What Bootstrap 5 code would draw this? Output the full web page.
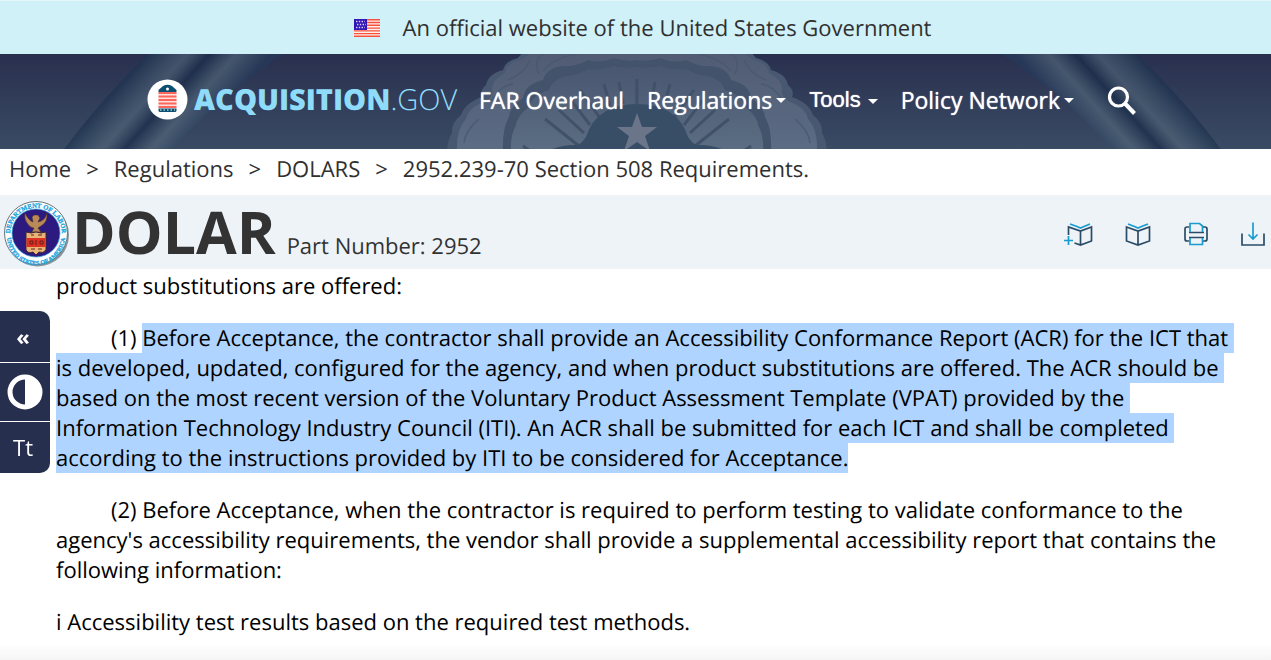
<!DOCTYPE html>
<html lang="en">
<head>
<meta charset="utf-8">
<meta name="viewport" content="width=device-width, initial-scale=1">
<title>2952.239-70 Section 508 Requirements. | Acquisition.GOV</title>
<link href="https://cdn.jsdelivr.net/npm/bootstrap@5.3.0/dist/css/bootstrap.min.css" rel="stylesheet">
<style>
  body { font-family: "Open Sans", sans-serif; font-size: 22px; line-height: 30px; color: #000; background: #fff; overflow: hidden; text-rendering: geometricPrecision; }
  .gov-banner { background: #d1f1f8; color: #303030; height: 54px; gap: 23px; border-top: 1px solid #e4f7fb; padding: 0 0 0 14px; }
  .site-header { position: relative; height: 95px; background: linear-gradient(#29304f, #3a4b64); overflow: hidden; }
  .site-header .backdrop { position: absolute; inset: 0; width: 100%; height: 100%; }
  .header-inner { position: relative; height: 100%; padding: 0 0 4px 147px; }
  .brand { color: #8fdcfa; font-size: 29px; gap: 6px; width: 332px; text-decoration: none; line-height: 40px; white-space: nowrap; }
  .brand b { font-weight: 800; }
  .brand span { font-weight: 300; }
  .main-menu { gap: 23px; }
  .main-menu a, .main-menu button { color: #fff; font-size: 23px; line-height: 32px; padding: 0; border: 0; background: none; text-decoration: none; white-space: nowrap; text-shadow: 0 0 1px #fff; }
  .main-menu .dropdown-toggle::after { border-top-width: 5px; border-left-width: 5px; border-right-width: 5px; margin-left: 4px; vertical-align: 6px; }
  .main-menu .tools-toggle { font-family: "Liberation Sans", sans-serif; font-size: 22px; }
  .main-menu .tools-toggle::after { margin-left: 7px; vertical-align: 3px; }
  .search-btn { margin-left: 10px; }
  .crumbs { height: 46px; padding: 0 9px 6px; color: #303030; }
  .crumbs .breadcrumb { --bs-breadcrumb-divider: ">"; --bs-breadcrumb-divider-color: #303030; --bs-breadcrumb-item-padding-x: 15px; --bs-breadcrumb-item-active-color: #303030; --bs-breadcrumb-font-size: 22px; }
  .crumbs a { color: #303030; text-decoration: none; }
  .title-bar { background: #eef3f8; color: #333; height: 74px; padding: 3px 0 0 3px; }
  .title-bar h1 { font-size: 59px; font-weight: 700; line-height: 68px; }
  .title-text { gap: 11px; margin-left: 1px; padding-bottom: 3px; }
  .tool-links { gap: 29px; padding-right: 5px; }
  .tool-links button { border: 0; background: none; padding: 0; line-height: 0; }
  .article { padding: 2px 36px 0 56px; }
  .article p { margin: 0 0 22px; white-space: break-spaces; }
  .article .indent { text-indent: 55px; }
  .picked { background: #afd4ff; }
  .side-tools { position: fixed; left: 0; top: 311px; width: 50px; border-radius: 0 10px 10px 0; overflow: hidden; background: #272f4e; }
  .side-tools button { border: 0; border-bottom: 1px solid #fff; background: none; color: #fff; height: 52px; padding: 0 4px 2px 0; display: flex; align-items: center; justify-content: center; width: 100%; }
  .side-tools .contrast-btn { height: 59px; padding: 0; }
  .side-tools button:last-child { border: 0; height: 51px; }
  .bottom-fade { position: fixed; left: 0; right: 0; bottom: 0; height: 16px; background: linear-gradient(#fff0, #f5f5f5); }
</style>
</head>
<body>
<div class="gov-banner d-flex align-items-center justify-content-center">
  <svg width="26" height="18" viewBox="0 0 26 18" aria-hidden="true">
    <path fill="#fff0ec" d="M0 0h26v18H0z"/>
    <path stroke="#f8503c" stroke-width="1.4" d="M0 .7h26M0 3.5h26M0 6.3h26M0 9.1h26M0 11.9h26M0 14.6h26M0 17.3h26"/>
    <path fill="#3215b5" d="M0 0h13v11H0z"/>
    <path stroke="#d8cff5" stroke-width="1.4" stroke-dasharray="1.4 1.4" d="M2 2.5h9M3 5.5h9M2 8.5h9"/>
  </svg>
  <span>An official website of the United States Government</span>
</div>

<header class="site-header">
  <svg class="backdrop" viewBox="0 54 1271 95" preserveAspectRatio="xMidYMid slice" aria-hidden="true">
    <defs>
      <linearGradient id="ringShade" gradientUnits="userSpaceOnUse" x1="107" y1="100" x2="175" y2="161">
        <stop offset="0" stop-color="#1f3350" stop-opacity=".75"/><stop offset=".32" stop-color="#53687b" stop-opacity=".6"/>
        <stop offset=".5" stop-color="#1a2c4a" stop-opacity=".75"/><stop offset=".72" stop-color="#53687b" stop-opacity=".65"/>
        <stop offset="1" stop-color="#24395a" stop-opacity=".7"/>
      </linearGradient>
      <linearGradient id="sealFill" gradientUnits="userSpaceOnUse" x1="0" y1="54" x2="0" y2="149">
        <stop offset="0" stop-color="#515c74"/><stop offset="1" stop-color="#5b6c84"/>
      </linearGradient>
      <linearGradient id="glory" gradientUnits="userSpaceOnUse" x1="0" y1="62" x2="0" y2="149">
        <stop offset="0" stop-color="#48566f"/><stop offset="1" stop-color="#5b6d83"/>
      </linearGradient>
      <g id="cloudHalf">
        <path fill="#475870" d="M638 40H526q-2 12-8 18-13 3-15 12-15 4-17 15-7 6-4 12-17 6-21 18-10 8-9 18-5 8-5 20h191z"/>
        <path fill="url(#sealFill)" d="M638 40H534q0 14-14 20-13 3-15 13-13 7-13 16 2 8-8 13-16 6-18 17-10 11-9 32h181z"/>
        <path fill="#43536b" d="M638 60q-12 2-24-2-15 6-26 2-13 7-24 6-17 1-21 14-18 4-20 18-14 10-14 19-7 12-6 34h135z"/>
        <path fill="url(#glory)" d="M638 67q-13 2-24-1-15 5-26 3-12 7-22 7-14 4-17 14-17 5-20 17-12 9-13 18-6 11-5 26h127z"/>
        <g fill="none" stroke="#465770" stroke-width="1.500" opacity=".8">
          <path d="M539 74q-7-17 8-22M543 71q12-14 34-17M491 101q10-16 22-17M464 143q1-12 15-24M530 60q-6 14-22 20"/>
        </g>
        <path stroke="#405169" stroke-width="3" d="M637 79v27M604 84l6 22M619 82l4 22M571 100l19 25M580 90l20 28M545 119l34 27M559 110l25 23M523 146l10 7"/>
        <path fill="#384e67" d="M638 104q-42 0-52 33-3 5-8 8-16-1-30 6h90z"/>
      </g>
      <path id="ring" fill="url(#ringShade)" d="M151 52Q105 94 62 152h108Q218 96 286 52z"/>
    </defs>
    <use href="#ring"/>
    <use href="#ring" transform="translate(1285 0) scale(-1 1)"/>
    <use href="#cloudHalf"/>
    <use href="#cloudHalf" transform="translate(1274 0) scale(-1 1)"/>
    <path fill="#6b7589" d="m637 113 5 14h15l-12 9 5 15-13-9-13 9 5-15-12-9h15z"/>
  </svg>
  <div class="header-inner d-flex align-items-center">
    <a class="brand d-flex align-items-center" href="#">
      <svg width="41" height="41" viewBox="0 0 41 41" aria-hidden="true">
        <circle cx="20.500" cy="20.500" r="20" fill="#fff"/>
        <path fill="#0b5072" d="M11.500 13V11L16 7q4.500-2.500 9 0l4.500 4v2z"/>
        <circle cx="20.500" cy="10" r="1.500" fill="#fff"/>
        <path fill="#ffe0dc" d="M11.500 13h18v16h-18z"/>
        <path stroke="#fb665c" stroke-width="2" d="M11.500 14h18M11.500 17.500h18M11.500 21h18M11.500 24.500h18M11.500 28h18"/>
        <path fill="#0b5072" d="M11.500 29.500h18V32l-1 1h-16l-1-1z"/>
        <path stroke="#fff" stroke-dasharray="1.500 2" d="M13 31h15"/>
      </svg>
      <div><b>ACQUISITION</b><span>.GOV</span></div>
    </a>
    <nav class="main-menu d-flex align-items-center" aria-label="Main">
      <a href="#">FAR Overhaul</a>
      <button type="button" class="dropdown-toggle">Regulations</button>
      <button type="button" class="dropdown-toggle tools-toggle">Tools</button>
      <button type="button" class="dropdown-toggle">Policy Network</button>
      <button type="button" class="search-btn" aria-label="Search">
        <svg width="30" height="30" viewBox="0 0 30 30" fill="none" stroke="#fff"><circle cx="11.500" cy="11" r="9" stroke-width="3.200"/><path stroke-width="4" d="m18 17.500 9.500 10"/></svg>
      </button>
    </nav>
  </div>
</header>

<nav class="crumbs d-flex align-items-center" aria-label="Breadcrumb">
  <ol class="breadcrumb mb-0">
    <li class="breadcrumb-item"><a href="#">Home</a></li>
    <li class="breadcrumb-item"><a href="#">Regulations</a></li>
    <li class="breadcrumb-item"><a href="#">DOLARS</a></li>
    <li class="breadcrumb-item active" aria-current="page">2952.239-70 Section 508 Requirements.</li>
  </ol>
</nav>

<div class="title-bar d-flex align-items-center">
  <svg width="68" height="68" viewBox="0 0 68 68" role="img" aria-label="Department of Labor seal">
    <defs><path id="sealTop" d="M8 41A26 26 0 1 1 58 41"/><path id="sealLow" d="M4 36A29 29 0 0 0 62 36"/></defs>
    <circle cx="34.500" cy="35" r="31.500" fill="#8b949c"/>
    <circle cx="33" cy="33" r="31.500" fill="#fff" stroke="#68757c"/>
    <circle cx="33" cy="33" r="24" fill="#2c1a80" stroke="#38a6d8" stroke-width=".7"/>
    <g fill="#1aa5e0" stroke="#1aa5e0" stroke-width=".3" font-family="Liberation Serif, serif" font-weight="700" font-size="6.500" text-anchor="middle">
      <text><textPath href="#sealTop" startOffset="50%">DEPARTMENT OF LABOR</textPath></text>
      <text font-size="6"><textPath href="#sealLow" startOffset="50%">UNITED STATES OF AMERICA</textPath></text>
    </g>
    <path fill="#b98a58" stroke="#4c302e" stroke-width=".6" d="M22 13q4 8 8 9l-1-5 2-2h4l2 3-2 4q7-1 9-9 1 9-6 13l-3 2 3 4h-9l2-4q-4 0-7-5-3-4-2-10z"/>
    <path fill="#e9b577" stroke="#3d2536" d="M23 32l5 1 5-1 5 1 5-1v18q-3 4-7 2l-3 3-3-3q-5 2-7-2z"/>
    <path fill="#dc3022" d="M23.500 38h19v9h-19z"/>
    <path stroke="#63201e" fill="none" d="M27 41h3v3h-3zM33 40v5M37 41h3v3h-3zM28 35h3M35 35h4M28 49h4M35 49h4"/>
  </svg>
  <div class="title-text d-flex align-items-baseline">
    <h1 class="mb-0">DOLAR</h1>
    <span>Part Number: 2952</span>
  </div>
  <div class="tool-links d-flex ms-auto">
    <button type="button" aria-label="Add to favorites">
      <svg width="30" height="28" viewBox="0 0 30 28" fill="none" stroke="#2b4c66" stroke-width="1.700"><path d="M5.500 15V7l12 4 11-4v14l-11 4-6-2M17.500 11v14"/><path stroke="#189cce" d="m7 4 7 2.500 3.500 1.500L21 6.500 27 4M1 20.500h9M5.500 16v9"/></svg>
    </button>
    <button type="button" aria-label="Favorites">
      <svg width="30" height="28" viewBox="0 0 30 28" fill="none" stroke="#2b4c66" stroke-width="1.700"><path d="M4.500 7 16 11l11.500-4v14L16 25 4.500 21zM16 11v14"/><path stroke="#189cce" d="m6 4 6.500 2.500L16 8l3.500-1.500L26 4"/></svg>
    </button>
    <button type="button" aria-label="Print">
      <svg width="30" height="28" viewBox="0 0 30 28" fill="none" stroke="#2b4c66" stroke-width="1.700"><path d="M8.500 7H6Q4 7 4 9v10q0 2 2 2h2.500M22 7h2q2 0 2 2v10q0 2-2 2h-2.500M8 12.500h15M8 17.500h15"/><path stroke="#189cce" d="M9 12V3.500h9.500L21.500 6v6M9 18v6.500h12.500V18"/></svg>
    </button>
    <button type="button" aria-label="Download">
      <svg width="26" height="28" viewBox="0 0 26 28" fill="none" stroke="#2b4c66" stroke-width="1.700"><path d="M2 13.500V25h22V13.500"/><path stroke="#189cce" d="M13 2.500V19m-4.500-4.500L13 19l4.500-4.500"/></svg>
    </button>
  </div>
</div>

<main class="article">
  <p>product substitutions are offered:</p>
  <p class="indent">(1) <span class="picked">Before Acceptance, the contractor shall provide an Accessibility Conformance Report (ACR) for the ICT that is developed, updated, configured for the agency, and when product substitutions are offered. The ACR should be based on the most recent version of the Voluntary Product Assessment Template (VPAT) provided by the Information Technology Industry Council (ITI). An ACR shall be submitted for each ICT and shall be completed according to the instructions provided by ITI to be considered for Acceptance.</span></p>
  <p class="indent">(2) Before Acceptance, when the contractor is required to perform testing to validate conformance to the agency's accessibility requirements, the vendor shall provide a supplemental accessibility report that contains the following information:</p>
  <p>i Accessibility test results based on the required test methods.</p>
</main>

<aside class="side-tools" aria-label="Accessibility tools">
  <button type="button" aria-label="Collapse"><b>«</b></button>
  <button type="button" class="contrast-btn" aria-label="Contrast">
    <svg width="36" height="36" viewBox="0 0 36 36"><circle cx="18" cy="18" r="15" fill="none" stroke="#fff" stroke-width="5"/><path fill="#fff" d="M18 4a14 14 0 0 1 0 28z"/></svg>
  </button>
  <button type="button" aria-label="Text size">Tt</button>
</aside>
<div class="bottom-fade"></div>
<script src="https://cdn.jsdelivr.net/npm/bootstrap@5.3.0/dist/js/bootstrap.bundle.min.js"></script>
</body>
</html>
